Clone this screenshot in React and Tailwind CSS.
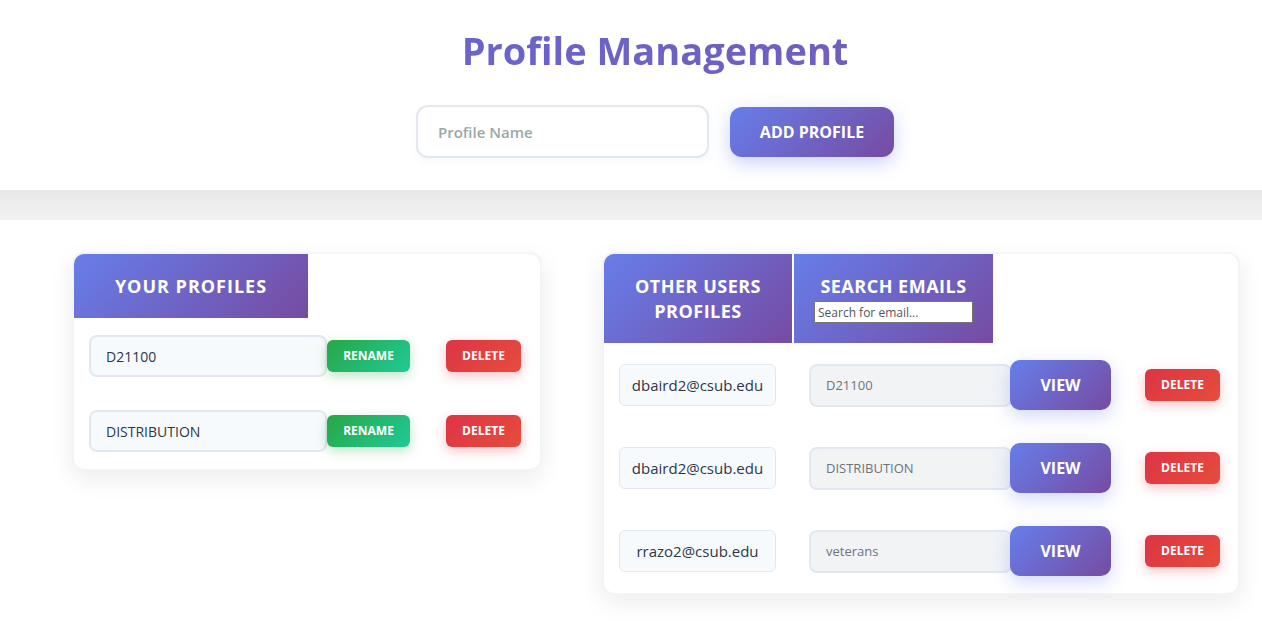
import React from 'react';

const grad = 'bg-[linear-gradient(135deg,#667eea_0%,#764ba2_100%)]';

const yourProfiles = ['D21100', 'DISTRIBUTION'];

const otherProfiles = [
  { email: 'dbaird2@csub.edu', name: 'D21100' },
  { email: 'dbaird2@csub.edu', name: 'DISTRIBUTION' },
  { email: 'rrazo2@csub.edu', name: 'veterans' },
];

const DeleteButton = () => (
  <button className="h-8 w-[75px] rounded-md bg-[linear-gradient(135deg,#dc3545,#e74c3c)] text-[12px] font-bold text-white shadow-[0_4px_12px_rgba(220,53,69,0.3)]">
    DELETE
  </button>
);

const App = () => {
  return (
    <div className="min-h-[621px] bg-white font-['Open_Sans',sans-serif] text-[#2d3748]">
      <header className="flex h-[190px] flex-col items-center pl-[48px] pt-[26px]">
        <h1 className="bg-[linear-gradient(90deg,#6a64cc,#6f5fbf)] bg-clip-text text-[38px] font-bold leading-[48px] text-transparent">
          Profile Management
        </h1>
        <div className="mt-[31px] flex items-center gap-[21px]">
          <input
            placeholder="Profile Name"
            className="h-[53px] w-[293px] rounded-xl border-2 border-[#e2e8f0] bg-white px-5 text-[15px] font-semibold outline-none placeholder:text-[#9aa8a6] shadow-[0_4px_10px_rgba(0,0,0,0.03)]"
          />
          <button className={`${grad} h-[50px] w-[164px] rounded-xl text-[16px] font-bold text-white shadow-[0_6px_18px_rgba(102,126,234,0.35)]`}>
            ADD PROFILE
          </button>
        </div>
      </header>

      <div className="h-[30px] bg-[linear-gradient(180deg,#e8e8e8,#f2f2f2)]" />

      <main className="flex items-start gap-[60px] pl-[72px] pt-[32px]">
        <section className="w-[470px] rounded-xl border-2 border-[#f3f4f6] bg-white shadow-[0_8px_24px_rgba(0,0,0,0.08)]">
          <div className={`${grad} flex h-[64px] w-[234px] items-center justify-center rounded-tl-[10px] text-[18px] font-bold tracking-[1px] text-white`}>
            YOUR PROFILES
          </div>
          <div className="flex flex-col gap-[33px] px-[15px] pb-[17px] pt-[17px]">
            {yourProfiles.map((p) => (
              <div key={p} className="flex items-center">
                <input
                  defaultValue={p}
                  className="h-[42px] w-[238px] rounded-lg border-2 border-[#e2e8f0] bg-[#f7fafc] px-[15px] text-[14px] text-[#2d3748] outline-none"
                />
                <button className="h-8 w-[83px] rounded-md bg-[linear-gradient(135deg,#28a745,#20c997)] text-[12px] font-bold text-white shadow-[0_4px_12px_rgba(40,167,69,0.3)]">
                  RENAME
                </button>
                <div className="ml-[36px]">
                  <DeleteButton />
                </div>
              </div>
            ))}
          </div>
        </section>

        <section className="w-[638px] rounded-xl border-2 border-[#f3f4f6] bg-white shadow-[0_8px_24px_rgba(0,0,0,0.08)]">
          <div className="flex gap-[2px]">
            <div className={`${grad} flex h-[89px] w-[188px] items-center justify-center rounded-tl-[10px] text-center text-[18px] font-bold leading-[25px] tracking-[0.5px] text-white`}>
              OTHER USERS
              <br />
              PROFILES
            </div>
            <div className={`${grad} flex h-[89px] w-[199px] flex-col items-center pt-[20px] text-white`}>
              <span className="text-[18px] font-bold leading-[24px] tracking-[0.5px]">SEARCH EMAILS</span>
              <input
                placeholder="Search for email..."
                className="mt-[3px] h-[22px] w-[159px] border border-[#767676] bg-white px-[3px] text-[12px] text-black placeholder:text-[#555] outline-none"
              />
            </div>
          </div>
          <div className="flex flex-col gap-[33px] px-[15px] pb-[17px] pt-[17px]">
            {otherProfiles.map((p, i) => (
              <div key={i} className="flex h-[50px] items-center">
                <div className="flex h-[42px] w-[157px] items-center justify-center rounded-md border border-[#e2e8f0] bg-[#f7fafc] text-[15px] text-[#2d3748]">
                  {p.email}
                </div>
                <input
                  defaultValue={p.name}
                  className="ml-[33px] h-[43px] w-[203px] rounded-lg border-2 border-[#e2e8f0] bg-[#f1f3f5] px-[15px] text-[13px] text-[#6c757d] outline-none"
                />
                <button className={`${grad} -ml-[2px] h-[50px] w-[101px] rounded-[10px] text-[16px] font-bold text-white shadow-[0_6px_18px_rgba(102,126,234,0.3)]`}>
                  VIEW
                </button>
                <div className="ml-[34px]">
                  <DeleteButton />
                </div>
              </div>
            ))}
          </div>
        </section>
      </main>
    </div>
  );
};

export default App;
